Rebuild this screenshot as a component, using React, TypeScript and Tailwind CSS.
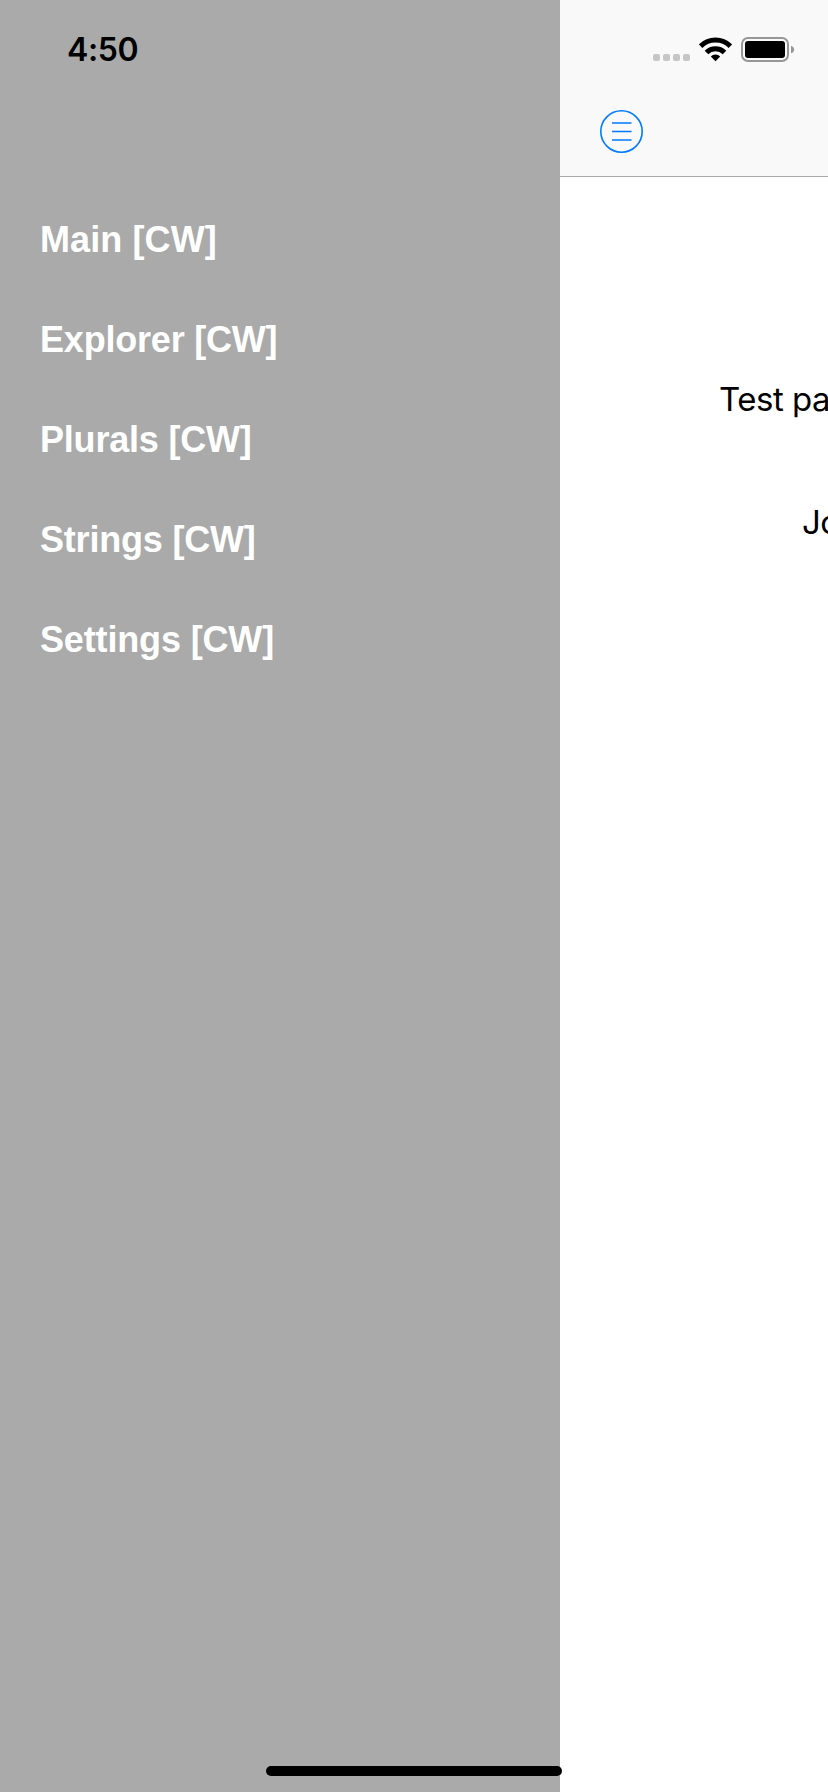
const menuItems = [
  { label: 'Main [CW]', tracking: 'tracking-[0.1px]' },
  { label: 'Explorer [CW]', tracking: 'tracking-[-0.2px]' },
  { label: 'Plurals [CW]', tracking: 'tracking-[-0.2px]' },
  { label: 'Strings [CW]', tracking: 'tracking-[-0.2px]' },
  { label: 'Settings [CW]', tracking: 'tracking-[-0.15px]' },
];

function StatusIcons() {
  return (
    <div className="flex items-end pt-[37px] pl-[93px]">
      <div className="mb-[1px] flex gap-[3px]">
        <span className="size-[7px] rounded-[2px] bg-[#c6c6c6]" />
        <span className="size-[7px] rounded-[2px] bg-[#c6c6c6]" />
        <span className="size-[7px] rounded-[2px] bg-[#c6c6c6]" />
        <span className="size-[7px] rounded-[2px] bg-[#c6c6c6]" />
      </div>
      <svg className="ml-[9px] h-[25px] w-[33px] shrink-0" viewBox="0 0 33 25" aria-hidden="true">
        <g fill="none" stroke="#000" strokeWidth="5">
          <path d="M1.6 9.2a21.1 21.1 0 0 1 29.8 0" />
          <path d="M7.5 15.4a12.7 12.7 0 0 1 18 0" />
        </g>
        <path d="M16.5 24.2 11.8 19.4a6.7 6.7 0 0 1 9.4 0Z" />
      </svg>
      <svg className="ml-[9px] h-[25px] w-[54px] shrink-0" viewBox="0 0 54 25" aria-hidden="true">
        <rect x="1" y="1" width="46" height="23" rx="6" fill="none" stroke="#979797" strokeWidth="2" />
        <rect x="4" y="4" width="40" height="17" rx="3" />
        <path d="M50 8.7c4.2 1.4 4.2 6.2 0 7.6Z" fill="#979797" />
      </svg>
    </div>
  );
}

export default function App() {
  return (
    <div className="relative flex h-[1792px] w-[828px] overflow-hidden bg-white">
      <aside className="w-[560px] shrink-0 bg-[#aaaaaa]">
        <div className="h-[190px] pt-[30px] pl-[67px] font-['Inter',sans-serif] text-[32px] leading-[40px] font-semibold tracking-[-0.4px] text-black">
          4:50
        </div>
        <nav className="flex flex-col pl-[40px] font-['Liberation_Sans',sans-serif] text-[36px] font-bold text-white">
          {menuItems.map((item) => (
            <a key={item.label} className={`flex h-[100px] items-center whitespace-nowrap ${item.tracking}`}>
              {item.label}
            </a>
          ))}
        </nav>
      </aside>
      <main className="flex w-[268px] shrink-0 flex-col overflow-hidden">
        <header className="h-[177px] shrink-0 border-b border-[#a9a9a9] bg-[#f9f9f9]">
          <StatusIcons />
          <button className="mt-[48px] ml-[40px] block" aria-label="Menu">
            <svg className="size-[43px]" viewBox="0 0 43 43" fill="none" stroke="#007aff">
              <circle cx="21.5" cy="21.5" r="20.7" strokeWidth="1.6" />
              <path d="M12 13h19.5M12 21.5h19.5M12 30h19.5" strokeWidth="1.7" />
            </svg>
          </button>
        </header>
        <p className="mt-[202px] pl-[159px] font-['Inter',sans-serif] text-[33px] leading-[40px] tracking-[-0.5px] whitespace-nowrap text-black">
          Test pa
        </p>
        <p className="mt-[83px] pl-[242px] font-['Inter',sans-serif] text-[33px] leading-[40px] tracking-[-0.5px] whitespace-nowrap text-black">
          Jo
        </p>
      </main>
      <div className="absolute top-[1766px] left-[266px] h-[10px] w-[296px] rounded-full bg-black" />
    </div>
  );
}
